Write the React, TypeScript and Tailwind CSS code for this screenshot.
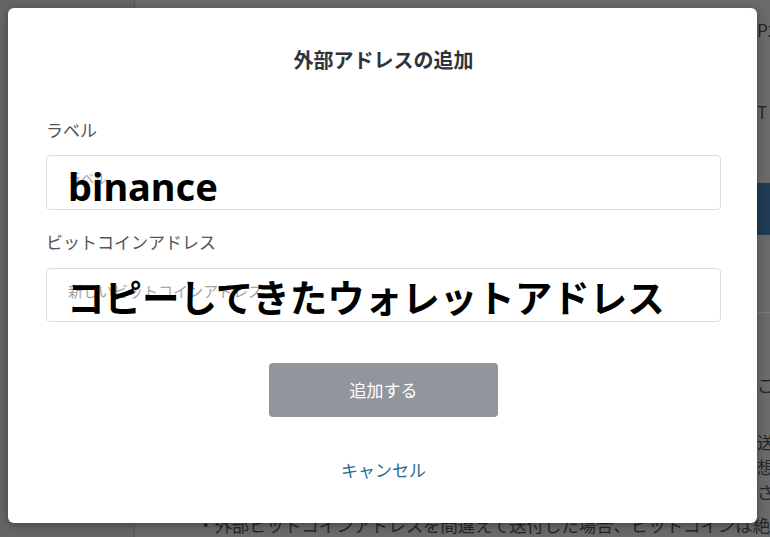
import React from "react";

const jp = { fontFamily: '"Noto Sans CJK JP", "Noto Sans", sans-serif' };

export default function App() {
  return (
    <div
      className="relative w-[770px] h-[537px] overflow-hidden flex bg-[#6a6a6a]"
      style={jp}
    >
      {/* dimmed background page */}
      <div className="w-[135px] h-full bg-[#656565] border-r border-[#575757] shrink-0" />
      <div className="flex-1 flex flex-col text-[17px] text-[#262626] leading-[24px]">
        <div className="mt-[18px] pl-[622px] whitespace-nowrap">P2Pの</div>
        <div className="mt-[58px] pl-[622px] whitespace-nowrap">T</div>
        <div className="mt-[59px] h-[58px] bg-[#203b53]" />
        <div className="mt-[77px] h-px bg-[#7a7a7a]" />
        <div className="mt-[60px] pl-[622px] whitespace-nowrap">こ</div>
        <div className="mt-[32px] pl-[622px] whitespace-nowrap leading-[25px]">送</div>
        <div className="pl-[622px] whitespace-nowrap leading-[25px]">想</div>
        <div className="pl-[622px] whitespace-nowrap leading-[25px]">さ</div>
        <div className="pl-[62px] whitespace-nowrap leading-[25px] mt-[8px] text-[17.4px]">
          ・外部ビットコインアドレスを間違えて送付した場合、ビットコインは絶対に戻りません
        </div>
      </div>

      {/* modal */}
      <div className="absolute left-[8px] top-[8px] w-[749px] h-[515px] bg-white rounded-[6px] shadow-[0_2px_8px_rgba(0,0,0,0.35)] flex flex-col pl-[38px] pr-[36px]">
        <div className="pt-[38px] text-center text-[20px] leading-[28px] font-bold text-[#2f343b]">
          外部アドレスの追加
        </div>

        <div className="mt-[44px] text-[17px] leading-[24px] text-[#555]">ラベル</div>
        <div className="relative mt-[13px] h-[55px] border border-[#dcdcdc] rounded-[4px] flex items-center pl-[21px] pb-[10px]">
          <span className="text-[13px] text-[#a5a5a5]">ラベル</span>
          <span
            className="absolute left-[21px] top-[11px] text-[38px] leading-[38px] font-bold text-black"
            style={{ fontFamily: '"Noto Sans", sans-serif' }}
          >
            binance
          </span>
        </div>

        <div className="mt-[20px] text-[17px] leading-[24px] text-[#555]">ビットコインアドレス</div>
        <div className="relative mt-[14px] h-[54px] border border-[#dcdcdc] rounded-[4px] flex items-center pl-[21px] pb-[8px]">
          <span className="text-[15px] text-[#a5a5a5]">新しいビットコインアドレス</span>
          <span className="absolute left-[20px] top-[8px] text-[37.5px] leading-[37px] font-bold text-black whitespace-nowrap">
            コピーしてきたウォレットアドレス
          </span>
        </div>

        <div className="mt-[41px] flex justify-center">
          <div className="w-[229px] h-[54px] bg-[#92969c] rounded-[4px] flex items-center justify-center text-white text-[17px]">
            追加する
          </div>
        </div>

        <div className="mt-[41px] text-center text-[17px] leading-[24px] text-[#2c6a93]">キャンセル</div>
      </div>
    </div>
  );
}
